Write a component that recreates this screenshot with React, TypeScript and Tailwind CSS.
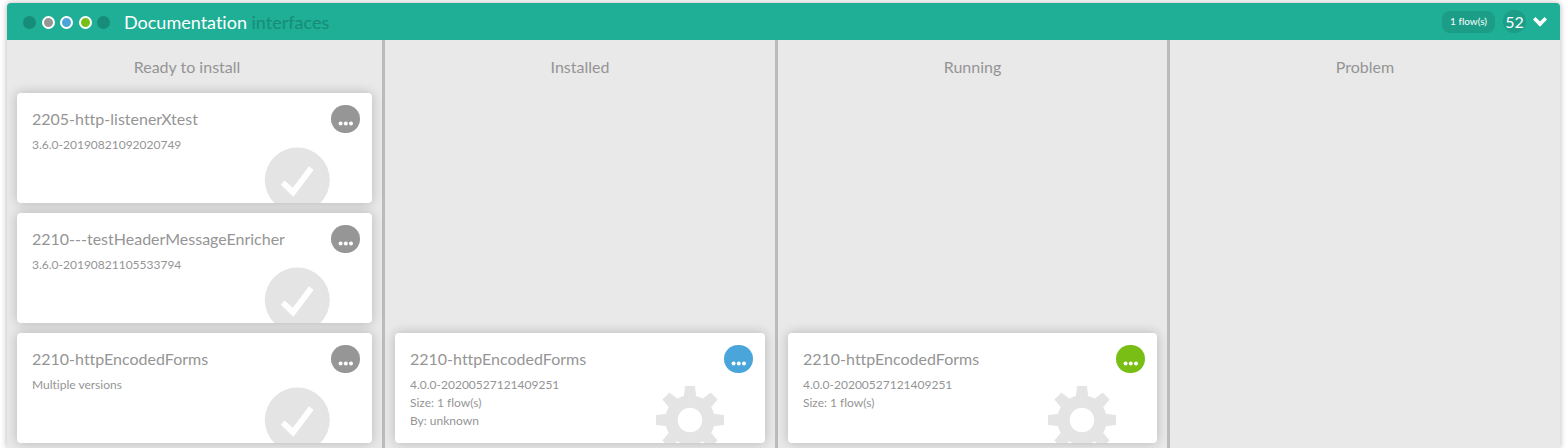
import React from 'react';

type Flow = {
  name: string;
  lines: string[];
};

type Column = {
  title: string;
  icon: 'check' | 'gear';
  button: string;
  heading?: string;
  flows: (Flow | null)[];
};

const columns: Column[] = [
  {
    title: 'Ready to install',
    icon: 'check',
    button: 'bg-[#969696]',
    heading: 'pr-[15px]',
    flows: [
      { name: '2205-http-listenerXtest', lines: ['3.6.0-20190821092020749'] },
      { name: '2210---testHeaderMessageEnricher', lines: ['3.6.0-20190821105533794'] },
      { name: '2210-httpEncodedForms', lines: ['Multiple versions'] },
    ],
  },
  {
    title: 'Installed',
    icon: 'gear',
    button: 'bg-[#4aa5da]',
    flows: [
      null,
      null,
      {
        name: '2210-httpEncodedForms',
        lines: ['4.0.0-20200527121409251', 'Size: 1 flow(s)', 'By: unknown'],
      },
    ],
  },
  {
    title: 'Running',
    icon: 'gear',
    button: 'bg-[#78be14]',
    flows: [
      null,
      null,
      {
        name: '2210-httpEncodedForms',
        lines: ['4.0.0-20200527121409251', 'Size: 1 flow(s)'],
      },
    ],
  },
  { title: 'Problem', icon: 'gear', button: 'bg-[#969696]', flows: [] },
];

const statusDots = [
  'bg-[#178c78]',
  'bg-[#969696] border-2 border-white',
  'bg-[#4aa5da] border-2 border-white',
  'bg-[#78be14] border-2 border-white',
  'bg-[#178c78]',
];

const CheckIcon = () => (
  <svg viewBox="-35 -35 70 70" className="size-[70px]" aria-hidden="true">
    <circle cx=".3" r="32.5" fill="#e4e4e4" />
    <path d="M-16.2 4.7-12.4.4-4.2 7.8 12-13.7 16.6-10-3.6 16.7z" fill="#fff" />
  </svg>
);

const GearIcon = () => (
  <svg viewBox="-35 -35 70 70" className="size-[70px]" aria-hidden="true">
    <circle r="18.5" fill="none" stroke="#e4e4e4" strokeWidth="12.5" />
    {[0, 45, 90, 135, 180, 225, 270, 315].map((angle) => (
      <path key={angle} d="M-5-34H5L6.2-23H-6.2z" fill="#e4e4e4" transform={`rotate(${angle})`} />
    ))}
  </svg>
);

const FlowCard = ({ flow, icon, button }: { flow: Flow; icon: Column['icon']; button: string }) => (
  <article className="relative h-[110px] rounded-[4px] bg-white shadow-[0_0_12px_rgba(0,0,0,0.22)]">
    <div className="absolute inset-0 overflow-hidden rounded-[4px]">
      <div className="absolute right-[40px] top-[52px]">
        {icon === 'check' ? <CheckIcon /> : <GearIcon />}
      </div>
    </div>
    <div className="relative px-[15px] pt-[14px]">
      <h3 className="text-[16px] leading-[24px]">{flow.name}</h3>
      <div className="pt-[5px] text-[12px] leading-[18px]">
        {flow.lines.map((line) => (
          <p key={line}>{line}</p>
        ))}
      </div>
    </div>
    <button
      type="button"
      aria-label={`Actions for ${flow.name}`}
      className={`absolute right-[12px] top-[12px] h-[28px] w-[29px] rounded-full ${button}`}
    >
      <svg viewBox="0 0 29 28" className="h-[28px] w-[29px]" fill="#fff" aria-hidden="true">
        <circle cx="9.6" cy="18.4" r="2" />
        <circle cx="14.8" cy="18.4" r="2" />
        <circle cx="20" cy="18.4" r="2" />
      </svg>
    </button>
  </article>
);

const App = () => {
  return (
    <main className="bg-white pl-[7px] pr-[8px] pt-[3px] font-['Lato',sans-serif] text-[#959595] [font-variant-ligatures:none]">
      <section className="rounded-t-[4px] bg-[#e9e9e9] shadow-[0_0_6px_rgba(0,0,0,0.3)]">
        <header className="flex h-[37px] items-center rounded-t-[4px] bg-[#1eaf96] pl-[16px] pr-[13px] text-white">
          <div className="flex w-[87px] justify-between pt-[2px]">
            {statusDots.map((dot, index) => (
              <span key={index} className={`size-[13px] rounded-full ${dot}`} />
            ))}
          </div>
          <h1 className="ml-[14px] text-[18px] leading-[24px]">
            Documentation <span className="text-[#178c78]">interfaces</span>
          </h1>
          <div className="ml-auto flex items-center">
            <span className="flex h-[22px] w-[53px] items-center justify-center rounded-[8px] bg-[#1b9d87] text-[10px]">
              1 flow(s)
            </span>
            <span className="ml-[8px] flex size-[23px] items-center justify-center rounded-full bg-[#1b9d87] text-[16px]">
              52
            </span>
            <button type="button" aria-label="Collapse" className="ml-[7px]">
              <svg viewBox="0 0 14 10" className="h-[10px] w-[14px]" aria-hidden="true">
                <path d="M0 2.6 2.5 0 7 4.6 11.5 0 14 2.6 7 9.8z" fill="#fff" />
              </svg>
            </button>
          </div>
        </header>

        <div className="grid grid-cols-[378fr_393fr_392fr_390fr]">
          {columns.map((column) => (
            <div
              key={column.title}
              className="border-r-[3px] border-[#bbbbbb] px-[10px] pb-[5px] pt-[15px] last:border-r-0"
            >
              <h2 className={`mb-[14px] text-center text-[16px] leading-[24px] ${column.heading ?? ''}`}>
                {column.title}
              </h2>
              <div className="flex flex-col gap-[10px]">
                {column.flows.map((flow, index) =>
                  flow ? (
                    <FlowCard key={index} flow={flow} icon={column.icon} button={column.button} />
                  ) : (
                    <div key={index} className="h-[110px]" />
                  )
                )}
              </div>
            </div>
          ))}
        </div>
      </section>
    </main>
  );
};

export default App;
